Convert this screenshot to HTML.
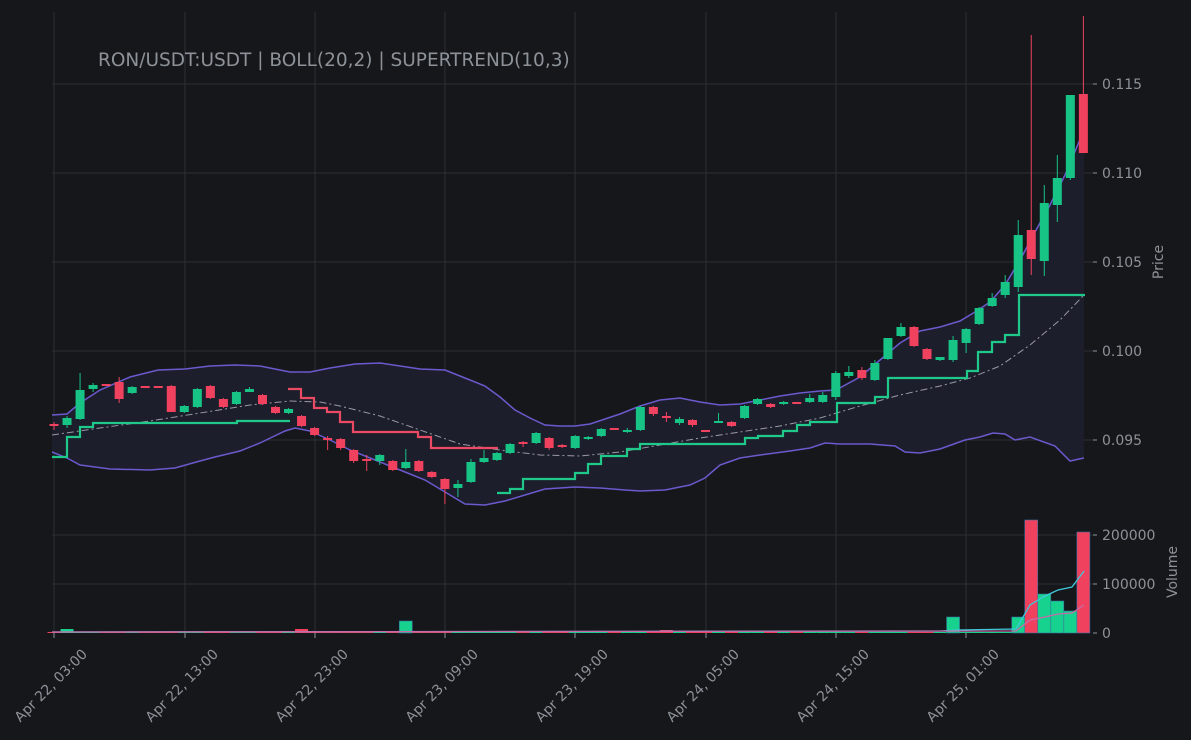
<!DOCTYPE html>
<html><head><meta charset="utf-8"><style>
html,body{margin:0;padding:0;background:#15171b;}
svg{display:block}
text{font-family:"DejaVu Sans","Liberation Sans",sans-serif;fill:#8d9299}
</style></head><body>
<svg id="s" width="1191" height="740" viewBox="0 0 1191 740" xmlns="http://www.w3.org/2000/svg">
<rect width="1191" height="740" fill="#15171b"/>
<g stroke="#2b3035" stroke-width="1">
<line x1="54" y1="12" x2="54" y2="633"/><line x1="185" y1="12" x2="185" y2="633"/><line x1="315" y1="12" x2="315" y2="633"/><line x1="445" y1="12" x2="445" y2="633"/><line x1="575" y1="12" x2="575" y2="633"/><line x1="706" y1="12" x2="706" y2="633"/><line x1="836" y1="12" x2="836" y2="633"/><line x1="966" y1="12" x2="966" y2="633"/>
<line x1="52" y1="84" x2="1093" y2="84"/><line x1="52" y1="173" x2="1093" y2="173"/><line x1="52" y1="262" x2="1093" y2="262"/><line x1="52" y1="351" x2="1093" y2="351"/><line x1="52" y1="440" x2="1093" y2="440"/>
<line x1="52" y1="535" x2="1093" y2="535"/><line x1="52" y1="584" x2="1093" y2="584"/>
</g>
<g id="bb"></g>
<g id="st"></g>
<g id="cd"></g>
<g id="vol"></g>
<g stroke="#8d9299" stroke-width="1">
<line x1="1093" y1="84" x2="1097" y2="84"/><line x1="1093" y1="173" x2="1097" y2="173"/><line x1="1093" y1="262" x2="1097" y2="262"/><line x1="1093" y1="351" x2="1097" y2="351"/><line x1="1093" y1="440" x2="1097" y2="440"/>
<line x1="1093" y1="535" x2="1097" y2="535"/><line x1="1093" y1="584" x2="1097" y2="584"/><line x1="1093" y1="633" x2="1097" y2="633"/>
<line x1="54" y1="633" x2="54" y2="638"/><line x1="185" y1="633" x2="185" y2="638"/><line x1="315" y1="633" x2="315" y2="638"/><line x1="445" y1="633" x2="445" y2="638"/><line x1="575" y1="633" x2="575" y2="638"/><line x1="706" y1="633" x2="706" y2="638"/><line x1="836" y1="633" x2="836" y2="638"/><line x1="966" y1="633" x2="966" y2="638"/>
</g>
<text x="98" y="66" font-size="18.5" fill="#9aa0a6">RON/USDT:USDT | BOLL(20,2) | SUPERTREND(10,3)</text>
<g font-size="14">
<text x="1102" y="89">0.115</text><text x="1102" y="178">0.110</text><text x="1102" y="267">0.105</text><text x="1102" y="356">0.100</text><text x="1102" y="445">0.095</text>
<text x="1102" y="540">200000</text><text x="1102" y="589">100000</text><text x="1102" y="638">0</text>
<text transform="translate(1163,262) rotate(-90)" text-anchor="middle">Price</text>
<text transform="translate(1177,572) rotate(-90)" text-anchor="middle">Volume</text>
<text transform="translate(88,655) rotate(-45)" text-anchor="end">Apr 22, 03:00</text>
<text transform="translate(219,655) rotate(-45)" text-anchor="end">Apr 22, 13:00</text>
<text transform="translate(349,655) rotate(-45)" text-anchor="end">Apr 22, 23:00</text>
<text transform="translate(479,655) rotate(-45)" text-anchor="end">Apr 23, 09:00</text>
<text transform="translate(609,655) rotate(-45)" text-anchor="end">Apr 23, 19:00</text>
<text transform="translate(740,655) rotate(-45)" text-anchor="end">Apr 24, 05:00</text>
<text transform="translate(870,655) rotate(-45)" text-anchor="end">Apr 24, 15:00</text>
<text transform="translate(1000,655) rotate(-45)" text-anchor="end">Apr 25, 01:00</text>
</g>
</svg>
<script>
var NS="http://www.w3.org/2000/svg";
function el(p,t,a){var e=document.createElementNS(NS,t);for(var k in a)e.setAttribute(k,a[k]);document.getElementById(p).appendChild(e);return e;}
function pts(a){return a.map(function(p){return p[0]+","+p[1]}).join(" ");}
var up=[[52,415],[67,414],[80,403],[100,390],[130,377],[158,370],[185,369],[210,366],[235,365],[260,366],[290,372],[310,372],[330,368],[355,364],[380,363],[420,369],[445,370],[465,378],[485,386],[500,397],[515,410],[530,418],[545,425],[560,426],[575,426],[590,424],[605,419],[620,414],[640,406],[660,400],[680,398],[700,402],[720,405],[740,404],[760,400],[780,396],[800,393],[820,391],[836,390],[860,377],[880,360],[900,343],[920,331],[940,327],[960,321],[975,312],[990,302],[1005,285],[1020,260],[1035,232],[1050,205],[1065,175],[1084,130]];
var lo=[[52,452],[67,458],[80,465],[110,469],[150,470],[175,468],[200,461],[215,457],[240,451],[260,443],[285,431],[295,428],[310,431],[330,440],[350,450],[375,460],[400,470],[425,480],[445,492],[465,504],[485,505],[505,501],[525,495],[545,489],[575,487],[600,488],[625,490],[640,491],[665,490],[690,485],[705,478],[720,465],[740,458],[760,455],[790,451],[810,448],[825,443],[840,444],[870,444],[895,446],[905,452],[920,453],[940,449],[965,440],[980,437],[993,433],[1005,434],[1015,440],[1030,437],[1055,446],[1070,461],[1084,458]];
var mid=[[52,435],[100,428],[150,421],[200,413],[250,405],[290,401],[320,402],[340,406],[380,416],[420,430],[460,444],[500,450],[540,455],[580,456],[620,452],[660,445],[700,438],[740,432],[780,426],[820,418],[860,406],[900,395],[940,386],[970,378],[1000,366],[1030,345],[1060,320],[1084,295]];
el("bb","polygon",{points:pts(up.concat(lo.slice().reverse())),fill:"#1d1e2b"});
el("bb","polyline",{points:pts(mid),fill:"none",stroke:"#9a9aa6","stroke-width":1,"stroke-dasharray":"7,3,2,3"});
el("bb","polyline",{points:pts(up),fill:"none",stroke:"#6a5acd","stroke-width":1.5});
el("bb","polyline",{points:pts(lo),fill:"none",stroke:"#6a5acd","stroke-width":1.5});
function steps(a){var r=[];for(var i=0;i<a.length;i++){r.push([a[i][0],a[i][2]]);r.push([a[i][1],a[i][2]]);}return r;}
var g1=[[52,67,457],[67,80,437],[80,93,427],[93,237,423],[237,290,421]];
var rd=[[288,301,389],[301,314,398],[314,327,408],[327,340,412],[340,353,422],[353,418,432],[418,431,437],[431,498,448]];
var g2=[[497,510,493],[510,523,489],[523,575,479],[575,588,473],[588,601,464],[601,627,456],[627,640,449],[640,745,444],[745,758,438],[758,783,436],[783,797,431],[797,810,425],[810,837,422],[837,875,403],[875,888,397],[888,967,378],[967,978,371],[978,992,352],[992,1005,342],[1005,1019,335],[1019,1085,295]];
[[g1,"#1fc98a"],[rd,"#ea4a63"],[g2,"#1fc98a"]].forEach(function(s){el("st","polyline",{points:pts(steps(s[0])),fill:"none",stroke:s[1],"stroke-width":2.2});});
var G="#17c486",R="#f0425f";
var c=[[424,426,422,430,R],[425,418,416,428,G],[419,390,373,420,G],[389,385,383,392,G],[385,385,384,386,R],[382,399,377,403,R],[393,387,386,394,G],[387,387,386,388,R],[387,387,386,388,R],[386,412,385,412,R],[412,406,405,413,G],[407,389,388,408,G],[386,398,385,399,R],[399,407,398,408,R],[404,392,391,405,G],[391,390,387,392,G],[395,404,394,405,R],[407,413,406,414,R],[413,409,408,414,G],[416,426,415,427,R],[428,435,427,436,R],[439,439,436,450,R],[439,448,438,450,R],[450,461,449,463,R],[460,460,455,471,R],[461,455,454,465,G],[461,470,460,471,R],[468,462,449,469,G],[461,471,460,472,R],[472,477,471,478,R],[479,489,478,504,R],[488,484,480,497,G],[482,462,459,483,G],[462,458,450,463,G],[460,453,452,461,G],[453,444,443,454,G],[443,443,441,447,R],[443,433,432,444,G],[438,448,437,450,R],[446,446,444,448,R],[448,436,435,449,G],[438,438,436,440,G],[436,429,428,437,G],[429,429,428,430,R],[431,431,428,433,G],[430,407,406,431,G],[407,414,406,416,R],[417,417,412,422,R],[423,419,417,425,G],[420,425,419,427,R],[431,431,430,432,R],[422,422,413,423,G],[422,426,421,427,R],[418,406,405,419,G],[404,399,398,405,G],[404,407,403,408,R],[403,403,401,405,G],[403,403,402,404,R],[402,398,394,403,G],[402,395,392,403,G],[397,373,371,400,G],[376,372,366,378,G],[370,378,367,380,R],[380,363,360,381,G],[359,338,338,360,G],[336,327,323,337,G],[327,346,326,347,R],[349,359,348,360,R],[359,358,357,361,G],[360,340,336,362,G],[343,329,328,353,G],[324,308,307,325,G],[306,298,293,307,G],[295,282,275,298,G],[287,235,220,292,G],[230,259,35,275,R],[261,203,185,276,G],[205,178,155,222,G],[178,95,95,180,G],[94,153,16,153,R]];
c.forEach(function(d,i){var x=54+13.03*i;var t=Math.min(d[0],d[1]),b=Math.max(d[0],d[1]);if(b-t<2){t-=1;b+=1;}
el("cd","line",{x1:x,x2:x,y1:d[2],y2:d[3],stroke:d[4],"stroke-width":1});
el("cd","rect",{x:x-4.5,y:t,width:9,height:b-t,fill:d[4]});});
var v={1:4,19:4,27:12,30:2,47:3,69:16,74:16,75:113,76:39,77:32,78:22,79:101};
for(var i=0;i<80;i++){var x=54+13.03*i;var h=v[i]||1;var col=c[i][4]==G?"#17d18f":"#f0425f";
el("vol","rect",{x:x-6.5,y:633-h,width:13,height:h,fill:col,stroke:"#3a6fa0","stroke-width":h>5?0.6:0});}
el("vol","polyline",{points:"52,632 940,631 958,630 1016,629 1030,605 1045,596 1058,590 1072,587 1084,571",fill:"none",stroke:"#3fc8d8","stroke-width":1.3});
el("vol","polyline",{points:"52,632 1016,631 1030,620 1045,617 1058,614 1072,613 1084,605",fill:"none",stroke:"#c86aa8","stroke-width":1.3});
</script>
</body></html>
